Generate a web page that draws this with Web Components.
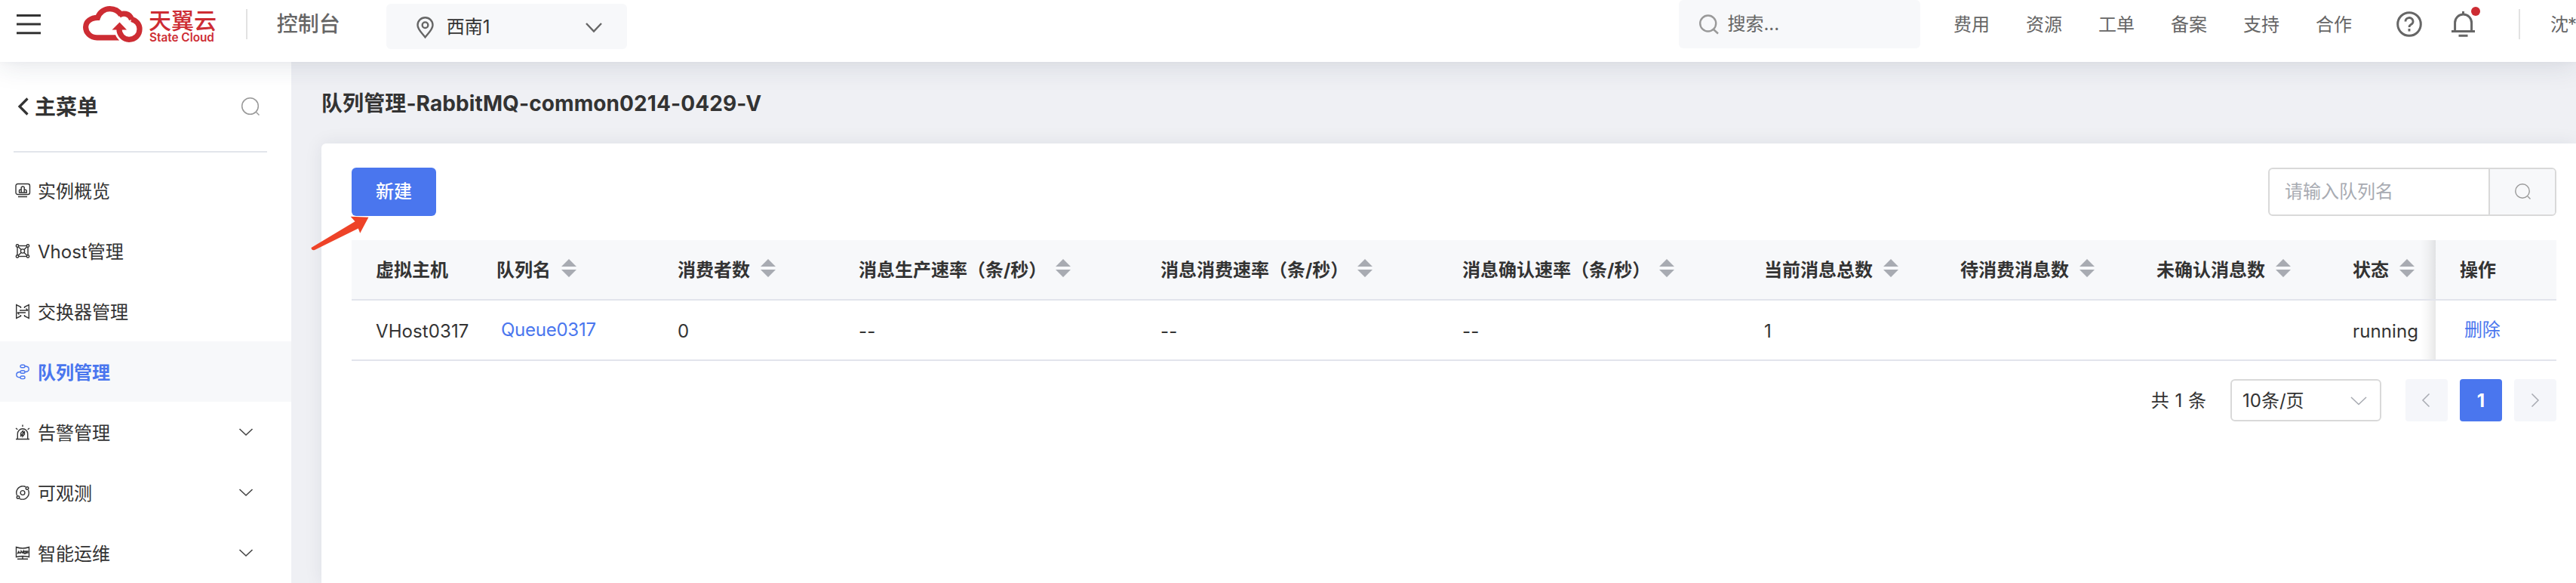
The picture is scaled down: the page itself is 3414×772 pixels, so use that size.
<!DOCTYPE html>
<html lang="zh-CN">
<head>
<meta charset="utf-8">
<title>队列管理</title>
<style>
html,body{margin:0;height:100%;overflow:hidden;background:#eff0f4}
body{font:24px/34px Inter,"Noto Sans CJK SC",sans-serif;color:#333}
</style>
</head>
<body>
<cloud-app></cloud-app>
<script>
const define = (name, html) => customElements.define(name, class extends HTMLElement {
  constructor() {
    super();
    const t = document.createElement('template');
    t.innerHTML = '<style>*{box-sizing:border-box}svg{display:block;flex:none;overflow:visible}</style>' + (typeof html === 'function' ? html(this) : html);
    this.attachShadow({mode: 'open'}).appendChild(t.content.cloneNode(true));
  }
});

define('cloud-logo', `
<style>
:host{display:flex;width:178px;height:50px;color:#cd2c33}
.words{margin-left:7px;display:flex;flex-direction:column}
.cn{font:500 30px/30px "Noto Sans CJK SC",sans-serif;white-space:nowrap;margin-top:3px}
.en{font:600 15.300px/18px Inter,sans-serif;white-space:nowrap;margin:1px 0 0 1px}
</style>
<svg width="80" height="50" viewBox="0 0 80 50" fill="none" stroke="currentColor" stroke-width="7.2">
<path d="M48 42.800H18.500C9.500 42.800 3.600 36 3.600 29C3.600 21.500 10.500 16.300 19.500 16.300C22 9 28.500 4.600 35.500 4.600C42 4.600 47.500 8 50.500 13"/>
<path d="M47.500 13.500C52 9.500 62 10 64.500 19"/>
<path d="M47.700 33C48.500 40 53.500 45.300 60.500 45.300" stroke="#fff" stroke-width="12"/>
<path d="M64 18.500C70.500 19.700 75 25 75 31.500C75 39.500 69 45.300 61 45.300C53.500 45.300 47.900 39 47.900 31"/>
<path d="M38.500 32.500L48.500 22.500L58 32.500z" fill="currentColor" stroke="none"/>
</svg>
<div class="words"><span class="cn">天翼云</span><span class="en">State Cloud</span></div>`);

define('region-picker', `
<style>
:host{display:flex;align-items:center;width:320px;height:60px;border-radius:6px;background:#f7f8fa;padding:2px 33px 0 40px;color:#333}
span{margin-left:17px;flex:1}
</style>
<svg width="23" height="29" viewBox="0 0 23 29" fill="none" stroke="#666" stroke-width="2.400"><path d="M11.500 27.300C7 21.500 1.500 17 1.500 11.200a10 10 0 0 1 20 0C21.500 17 16 21.500 11.500 27.300z"/><circle cx="11.500" cy="11.200" r="3.800"/></svg>
<span><slot></slot></span>
<svg width="22" height="13" viewBox="0 0 22 13" fill="none" stroke="#666" stroke-width="2.400"><path d="M1 1l10 10.500L21 1"/></svg>`);

define('top-search', `
<style>
:host{display:flex;align-items:center;width:320px;height:64px;border-radius:6px;background:#f7f8fa;padding:0 27px;color:#666}
span{margin-left:11px}
</style>
<svg width="26" height="26" viewBox="0 0 26 26" fill="none" stroke="#999" stroke-width="2.400"><circle cx="11.700" cy="12" r="10.500"/><path d="M19 20l6 5.500"/></svg>
<span><slot></slot></span>`);

define('top-bar', `
<style>
:host{display:flex;align-items:flex-start;height:82px;background:#fff;position:relative;z-index:2;box-shadow:0 4px 36px rgba(30,50,80,.13),0 0 8px rgba(30,50,80,.03);white-space:nowrap;color:#666}
.menu{margin:18px 0 0 22px}
cloud-logo{margin:7px 0 0 56px}
.rule{width:2px;height:40px;background:#e2e2e2;margin-top:12px;flex:none}
.console{font-size:28px;font-weight:500;line-height:40px;margin:12px 0 0 39px;width:84px}
region-picker{margin:5px 0 0 61px}
top-search{margin-left:1394px}
nav{display:flex;gap:48px;margin:16px 0 0 44px}
nav span{width:48px}
.help{margin:15px 0 0 59px}
.bell{margin:8px 0 0 39px}
.user{margin:16px 0 0 40px;width:34px;flex:none;letter-spacing:-1px}
</style>
<svg class="menu" width="32" height="28" viewBox="0 0 32 28" stroke="#333" stroke-width="3"><path d="M0 2.500H32M0 14H32M0 25.700H32"/></svg>
<cloud-logo></cloud-logo>
<div class="rule" style="margin-left:38px"></div>
<div class="console">控制台</div>
<region-picker>西南1</region-picker>
<top-search>搜索...</top-search>
<nav><span>费用</span><span>资源</span><span>工单</span><span>备案</span><span>支持</span><span>合作</span></nav>
<svg class="help" width="34" height="34" viewBox="0 0 34 34" fill="none" stroke="#666" stroke-width="3"><circle cx="17" cy="17" r="15.300"/><path d="M12 13.500a5 4.800 0 1 1 7 4.200q-2 1-2 3.300M17 23v3.500" stroke-width="2.900"/></svg>
<svg class="bell" width="40" height="42" viewBox="0 0 40 42" fill="none" stroke="#666" stroke-width="3"><path d="M4.600 33V22a11 11 0 0 1 22 0V33M0 33.500H31M15.500 7v4M9.500 39.200H21.500"/><circle cx="32" cy="7" r="6" fill="#cd2c33" stroke="none"/></svg>
<div class="rule" style="margin-left:49px"></div>
<div class="user">沈*</div>`);

const icons = {
  overview: '<rect x="1" y="1.500" width="18.500" height="14" rx="2.500"/><path d="M4 18.500H16M5.500 13V10.500q0-1.500 2.500-1.500M8.200 13V6q2-2 4 0V13M12.200 9q3 0 3 2v2M5 13H16"/>',
  vhost: '<rect x="3" y="3.500" width="14" height="14"/><path d="M3 3.500l5 5M17 3.500l-5 5M3 17.500l5-5M17 17.500l-5-5"/><circle cx="10" cy="10.500" r="2.600"/><g fill="#fff"><circle cx="3" cy="3.500" r="1.700"/><circle cx="17" cy="3.500" r="1.700"/><circle cx="3" cy="17.500" r="1.700"/><circle cx="17" cy="17.500" r="1.700"/></g>',
  exchange: '<path d="M7.500 6V4.500L1.700 1.700V19.300L7.500 16.500V15M12.500 6V4.500L18.300 1.700V19.300L12.500 16.500V15M3 12H14M5.500 14.500L3 12M17 9H6M14.500 6.500L17 9"/>',
  queue: '<rect x="7" y="1.200" width="6" height="3.600" rx="1.800"/><rect x="7" y="8.700" width="6" height="3.600" rx="1.800"/><rect x="7" y="16" width="6" height="3.600" rx="1.800"/><path d="M13 3C20 3 20 10.500 13 10.500M7 10.500C0 10.500 0 17.800 7 17.800"/>',
  alarm: '<path d="M1 19.500H19M3.300 19.500V12.500a6.700 6.700 0 0 1 13.400 0V19.500M10 .5V3M1 5l2.300 1.800M19 5l-2.300 1.800"/><path d="M10.500 8.500L7.500 11.500V15.500L10 14V16L12.500 13V9.500L10.500 11zM8 13.500L12.500 11" stroke-width="1.300"/>',
  observe: '<path d="M10.500 1.700A8.700 8.700 0 0 0 2.800 14.500M9.500 19.300A8.700 8.700 0 0 0 17.500 7"/><path d="M10.500 1.700q2 0 3.500 1M9.500 19.300q-2 0-3.500-1"/><circle cx="10" cy="10.500" r="2.900"/><circle cx="16" cy="4.500" r="1.800"/><circle cx="4" cy="16.500" r="1.800"/>',
  ops: '<path d="M1.500 2.500Q10 5.500 18.500 2.500V15.500Q10 13.500 1.500 15.500zM10 14.500V18M3 18.300H17"/><path d="M3 11.500L5 7.500V11M4 10H7M7.300 11L8 7.500L9.500 10L11 7.500V11M12 11V8H14V11zM15 11V8H17V10H15" stroke-width="1.300"/>'
};
define('side-item', el => `
<style>
:host{display:flex;align-items:center;height:80px;padding:0 51px 0 20px;color:#333}
:host([active]){background:#f7f8fa;color:#4a76ee;font-weight:700}
span{margin-left:10px;flex:1;white-space:nowrap;position:relative;top:1.500px}
</style>
<svg width="20" height="21" viewBox="0 0 20 21" fill="none" stroke="currentColor" stroke-width="1.400">${icons[el.getAttribute('icon')]}</svg>
<span><slot></slot></span>
${el.hasAttribute('group') ? '<svg width="18" height="10" viewBox="0 0 18 10" fill="none" stroke="#444" stroke-width="1.600"><path d="M.5 1L9 9L17.500 1"/></svg>' : ''}`);

define('side-menu', `
<style>
:host{display:block;width:386px;background:#fff;flex:none}
.head{display:flex;align-items:center;height:118px;padding:0 42px 0 24px;font-size:28px;font-weight:700;line-height:40px}
.head span{margin-left:8px;flex:1;padding-top:1px}
.line{height:2px;background:#e2e5eb;margin:0 32px 10px 18px}
</style>
<div class="head">
<svg width="14" height="24" viewBox="0 0 14 24" fill="none" stroke="#333" stroke-width="3.200"><path d="M12.500 1.500L2 12L12.500 22.500"/></svg>
<span>主菜单</span>
<svg width="24" height="24" viewBox="0 0 24 24" fill="none" stroke="#999" stroke-width="1.500"><circle cx="11.500" cy="11.500" r="10.800"/><path d="M19.500 19.500l4 4"/></svg>
</div>
<div class="line"></div>
<side-item icon="overview">实例概览</side-item>
<side-item icon="vhost">Vhost管理</side-item>
<side-item icon="exchange">交换器管理</side-item>
<side-item icon="queue" active>队列管理</side-item>
<side-item icon="alarm" group>告警管理</side-item>
<side-item icon="observe" group>可观测</side-item>
<side-item icon="ops" group>智能运维</side-item>`);

define('primary-button', `
<style>
:host{display:flex;align-items:center;justify-content:center;width:112px;height:64px;border-radius:6px;background:#4a76ee;color:#fff;font-weight:500;position:relative}
svg{position:absolute;left:-54px;top:64px}
</style>
<slot></slot>
<svg width="78" height="46" viewBox="0 0 78 46" fill="#ee4328"><path d="M52.700 .7L76.400 1.700L65.200 22.700L62.800 16.500L5 45Q1 46 .5 42L58.500 7.200z"/></svg>`);

define('queue-filter', `
<style>
:host{display:flex;width:382px;height:64px;border:2px solid #d9d9d9;border-radius:6px;overflow:hidden;color:#a8abb2}
.in{flex:1;padding:13px 20px}
.btn{width:88px;border-left:2px solid #d9d9d9;background:#f7f8fa;display:flex;align-items:center;justify-content:center}
</style>
<div class="in"><slot></slot></div>
<div class="btn"><svg width="21" height="21" viewBox="0 0 21 21" fill="none" stroke="#999" stroke-width="1.400" style="margin-top:-2px"><circle cx="10" cy="10" r="9.200"/><path d="M17 17l3.500 3.500"/></svg></div>`);

define('head-cell', el => `
<style>:host{display:flex;align-items:center;padding-left:32px;height:78px;font-weight:700;white-space:nowrap}span{position:relative;top:1px}svg{margin-left:14px;margin-top:-4px}:host([rate]) svg{margin-left:12px}</style>
<span><slot></slot></span>${el.hasAttribute('sort') ? '<svg width="20" height="24" viewBox="0 0 20 24" fill="#a8abb2"><path d="M0 10L10 0L20 10zM0 14L10 24L20 14z"/></svg>' : ''}`);

define('body-cell', `
<style>:host{display:flex;align-items:center;padding-left:32px;padding-top:3px;height:78px;white-space:nowrap;letter-spacing:.100px}:host([link]){color:#4a76ee;padding-left:38px;padding-top:0;padding-bottom:1px;letter-spacing:-.250px}</style><slot></slot>`);

define('queue-table', `
<style>
:host{display:block}
.row{display:grid;grid-template-columns:160px 240px 240px 400px 400px 400px 260px 260px 260px 142px 160px;height:80px;border-bottom:2px solid #e2e4ec}
.head{background:#f7f8fa}
.fixed{position:relative}
.fixed::before{content:"";position:absolute;left:-20px;width:20px;top:0;bottom:0;background:linear-gradient(to left,rgba(0,0,0,.09),rgba(0,0,0,.03) 50%,transparent)}
</style>
<div class="row head">
<head-cell>虚拟主机</head-cell><head-cell sort>队列名</head-cell><head-cell sort>消费者数</head-cell><head-cell sort rate>消息生产速率（条/秒）</head-cell><head-cell sort rate>消息消费速率（条/秒）</head-cell><head-cell sort rate>消息确认速率（条/秒）</head-cell><head-cell sort>当前消息总数</head-cell><head-cell sort>待消费消息数</head-cell><head-cell sort>未确认消息数</head-cell><head-cell sort>状态</head-cell><div class="fixed"><head-cell>操作</head-cell></div>
</div>
<div class="row">
<body-cell>VHost0317</body-cell><body-cell link>Queue0317</body-cell><body-cell>0</body-cell><body-cell>--</body-cell><body-cell>--</body-cell><body-cell>--</body-cell><body-cell>1</body-cell><body-cell></body-cell><body-cell></body-cell><body-cell>running</body-cell><div class="fixed"><body-cell link>删除</body-cell></div>
</div>`);

define('page-nav', `
<style>
:host{display:flex;justify-content:flex-end;align-items:center;margin-top:24px;height:56px}
.total{word-spacing:1px;padding-top:1px}
.size{width:200px;height:56px;border:2px solid #d9d9d9;border-radius:6px;margin:0 32px;display:flex;align-items:center;justify-content:space-between;padding:1px 17px 0 14px}
.b{width:56px;height:56px;border-radius:4px;background:#f5f6fa;display:flex;align-items:center;justify-content:center;margin-right:16px}
.b:last-child{margin:0}
.on{background:#4a76ee;color:#fff;font-weight:700;padding-top:1px}
</style>
<span class="total">共 1 条</span>
<div class="size"><span>10条/页</span><svg width="22" height="12" viewBox="0 0 22 12" fill="none" stroke="#a8abb2" stroke-width="1.600"><path d="M1 1l10 9.500L21 1"/></svg></div>
<div class="b"><svg width="10" height="18" viewBox="0 0 10 18" fill="none" stroke="#a8abb2" stroke-width="1.500" style="margin-right:2px"><path d="M9.500 .5L1 9L9.500 17.500"/></svg></div>
<div class="b on">1</div>
<div class="b"><svg width="10" height="18" viewBox="0 0 10 18" fill="none" stroke="#a8abb2" stroke-width="1.500"><path d="M.5 .5L9 9L.5 17.500"/></svg></div>`);

define('queue-page', `
<style>
:host{display:flex;flex-direction:column;flex:1;min-width:0;background:#eff0f4;padding-left:40px}
h1{margin:35px 0 0;font-size:28px;line-height:40px;font-weight:700;height:73px;white-space:nowrap;letter-spacing:.100px}
.card{flex:1;background:#fff;border-radius:6px 0 0 0;padding:32px 26px 0 40px;box-shadow:0 0 24px rgba(30,40,60,.08)}
.tools{display:flex;justify-content:space-between;margin-bottom:32px}
</style>
<h1>队列管理-RabbitMQ-common0214-0429-V</h1>
<div class="card">
<div class="tools"><primary-button>新建</primary-button><queue-filter>请输入队列名</queue-filter></div>
<queue-table></queue-table>
<page-nav></page-nav>
</div>`);

define('cloud-app', `
<style>
:host{display:flex;flex-direction:column;width:3414px;height:772px;overflow:hidden}
main{display:flex;flex:1;min-height:0;overflow:hidden}
</style>
<top-bar></top-bar>
<main><side-menu></side-menu><queue-page></queue-page></main>`);
</script>
</body>
</html>
